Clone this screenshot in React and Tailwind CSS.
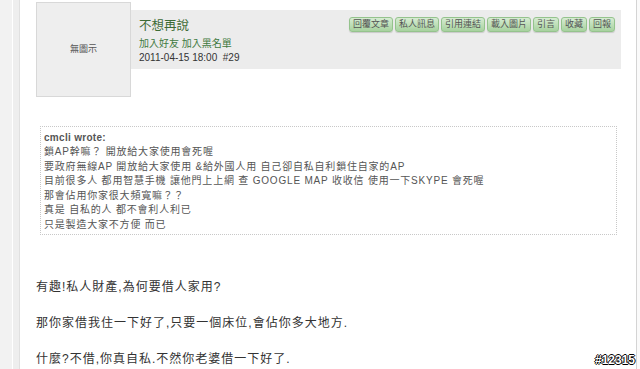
const buttons = ['回覆文章', '私人訊息', '引用連結', '載入圖片', '引言', '收藏', '回報']

const quoteLines = [
  '鎖AP幹嘛？ 開放給大家使用會死喔',
  '要政府無線AP 開放給大家使用 &給外國人用 自己卻自私自利鎖住自家的AP',
  '目前很多人 都用智慧手機 讓他門上上網 查 GOOGLE MAP 收收信 使用一下SKYPE 會死喔',
  '那會佔用你家很大頻寬嘛？？',
  '真是 自私的人 都不會利人利已',
  '只是製造大家不方便 而已',
]

// 討論區回覆
function App() {
  return (
    <div
      className="flex w-[640px] h-[369px] bg-white overflow-hidden"
      style={{ fontFamily: '"Liberation Sans", "Noto Sans CJK TC", sans-serif' }}
    >
      <div className="w-[12px] bg-[#f2f2f2]" />
      <div className="w-px bg-white" />
      <div className="w-[7px] bg-[#eeeeee] border-r border-[#e0e0e0]" />

      <div className="relative flex-1 pl-[16px] pr-[15px]">
        {/* 發文者資訊 */}
        <div className="flex mt-[2px]">
          <div className="w-[95px] h-[95px] shrink-0 bg-[#eeeeee] border border-[#d8d8d8] flex items-center justify-center text-[9px] text-[#555]">
            無圖示
          </div>
          <div className="flex-1 h-[59px] mt-[8px] bg-[#ececec] flex justify-between pl-[8px] pr-[6px] pt-[7px]">
            <div className="pt-[1px]">
              <div className="text-[12.5px] leading-[17px] text-[#3d6b35]">不想再說</div>
              <div className="text-[10px] leading-[14px] mt-[2px] text-[#3f7a3f]">加入好友 加入黑名單</div>
              <div className="text-[10px] leading-[13px] text-[#333]">2011-04-15 18:00 &nbsp;#29</div>
            </div>
            <div className="flex gap-[2px] h-[15px]">
              {buttons.map((b) => (
                <span
                  key={b}
                  className="px-[3px] h-[15px] leading-[13px] text-[9px] text-[#555] border border-[#95c38d] rounded-[3px] bg-gradient-to-b from-[#d6ecd2] to-[#a7d29f] shadow-[0_1px_1px_rgba(0,0,0,0.15)]"
                >
                  {b}
                </span>
              ))}
            </div>
          </div>
        </div>

        {/* 引言 */}
        <div className="ml-[4px] mr-[4px] mt-[29px] h-[109px] border border-dotted border-[#c8c8c8] px-[3px] pt-[4px] text-[#555]">
          <div className="text-[10px] font-bold leading-[14px] tracking-[0.3px]">cmcli wrote:</div>
          {quoteLines.map((line, i) => (
            <div key={i} className="text-[10px] leading-[14.5px] tracking-[0.8px]">
              {line}
            </div>
          ))}
        </div>

        {/* 回覆內容 */}
        <div className="mt-[43px] text-[12px] leading-[18px] tracking-[1px] text-[#333]">
          <div>有趣!私人財產,為何要借人家用?</div>
          <div className="mt-[18px]">那你家借我住一下好了,只要一個床位,會佔你多大地方.</div>
          <div className="mt-[18px]">什麼?不借,你真自私.不然你老婆借一下好了.</div>
        </div>

        <div
          className="absolute right-[1px] bottom-[3px] text-[12px] font-bold text-white leading-none"
          style={{ textShadow: '1px 0 0 #000, -1px 0 0 #000, 0 1px 0 #000, 0 -1px 0 #000' }}
        >
          #12315
        </div>
      </div>

      <div className="w-px bg-[#d4d4d4]" />
      <div className="w-[3px] bg-[#fafafa]" />
    </div>
  )
}

export default App
